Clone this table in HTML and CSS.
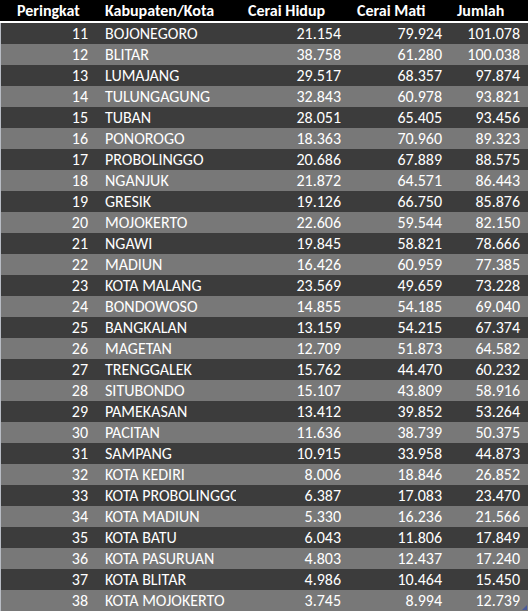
FILE: index.html
```html
<!DOCTYPE html>
<html>
<head>
<meta charset="utf-8">
<link rel="stylesheet" href="styles.css">
</head>
<body>
<div class="sheet">
<table class="rank">
<colgroup>
<col class="c1"><col class="c2"><col class="c3"><col class="c4"><col class="c5">
</colgroup>
<thead>
<tr>
<th class="h1">Peringkat</th><th class="h2">Kabupaten/Kota</th><th class="h3">Cerai Hidup</th><th class="h4">Cerai Mati</th><th class="h5">Jumlah</th>
</tr>
</thead>
<tbody>
<tr><td class="n1">11</td><td class="t2">BOJONEGORO</td><td class="n3">21.154</td><td class="n4">79.924</td><td class="n5">101.078</td></tr>
<tr><td class="n1">12</td><td class="t2">BLITAR</td><td class="n3">38.758</td><td class="n4">61.280</td><td class="n5">100.038</td></tr>
<tr><td class="n1">13</td><td class="t2">LUMAJANG</td><td class="n3">29.517</td><td class="n4">68.357</td><td class="n5">97.874</td></tr>
<tr><td class="n1">14</td><td class="t2">TULUNGAGUNG</td><td class="n3">32.843</td><td class="n4">60.978</td><td class="n5">93.821</td></tr>
<tr><td class="n1">15</td><td class="t2">TUBAN</td><td class="n3">28.051</td><td class="n4">65.405</td><td class="n5">93.456</td></tr>
<tr><td class="n1">16</td><td class="t2">PONOROGO</td><td class="n3">18.363</td><td class="n4">70.960</td><td class="n5">89.323</td></tr>
<tr><td class="n1">17</td><td class="t2">PROBOLINGGO</td><td class="n3">20.686</td><td class="n4">67.889</td><td class="n5">88.575</td></tr>
<tr><td class="n1">18</td><td class="t2">NGANJUK</td><td class="n3">21.872</td><td class="n4">64.571</td><td class="n5">86.443</td></tr>
<tr><td class="n1">19</td><td class="t2">GRESIK</td><td class="n3">19.126</td><td class="n4">66.750</td><td class="n5">85.876</td></tr>
<tr><td class="n1">20</td><td class="t2">MOJOKERTO</td><td class="n3">22.606</td><td class="n4">59.544</td><td class="n5">82.150</td></tr>
<tr><td class="n1">21</td><td class="t2">NGAWI</td><td class="n3">19.845</td><td class="n4">58.821</td><td class="n5">78.666</td></tr>
<tr><td class="n1">22</td><td class="t2">MADIUN</td><td class="n3">16.426</td><td class="n4">60.959</td><td class="n5">77.385</td></tr>
<tr><td class="n1">23</td><td class="t2">KOTA MALANG</td><td class="n3">23.569</td><td class="n4">49.659</td><td class="n5">73.228</td></tr>
<tr><td class="n1">24</td><td class="t2">BONDOWOSO</td><td class="n3">14.855</td><td class="n4">54.185</td><td class="n5">69.040</td></tr>
<tr><td class="n1">25</td><td class="t2">BANGKALAN</td><td class="n3">13.159</td><td class="n4">54.215</td><td class="n5">67.374</td></tr>
<tr><td class="n1">26</td><td class="t2">MAGETAN</td><td class="n3">12.709</td><td class="n4">51.873</td><td class="n5">64.582</td></tr>
<tr><td class="n1">27</td><td class="t2">TRENGGALEK</td><td class="n3">15.762</td><td class="n4">44.470</td><td class="n5">60.232</td></tr>
<tr><td class="n1">28</td><td class="t2">SITUBONDO</td><td class="n3">15.107</td><td class="n4">43.809</td><td class="n5">58.916</td></tr>
<tr><td class="n1">29</td><td class="t2">PAMEKASAN</td><td class="n3">13.412</td><td class="n4">39.852</td><td class="n5">53.264</td></tr>
<tr><td class="n1">30</td><td class="t2">PACITAN</td><td class="n3">11.636</td><td class="n4">38.739</td><td class="n5">50.375</td></tr>
<tr><td class="n1">31</td><td class="t2">SAMPANG</td><td class="n3">10.915</td><td class="n4">33.958</td><td class="n5">44.873</td></tr>
<tr><td class="n1">32</td><td class="t2">KOTA KEDIRI</td><td class="n3">8.006</td><td class="n4">18.846</td><td class="n5">26.852</td></tr>
<tr><td class="n1">33</td><td class="t2">KOTA PROBOLINGGO</td><td class="n3">6.387</td><td class="n4">17.083</td><td class="n5">23.470</td></tr>
<tr><td class="n1">34</td><td class="t2">KOTA MADIUN</td><td class="n3">5.330</td><td class="n4">16.236</td><td class="n5">21.566</td></tr>
<tr><td class="n1">35</td><td class="t2">KOTA BATU</td><td class="n3">6.043</td><td class="n4">11.806</td><td class="n5">17.849</td></tr>
<tr><td class="n1">36</td><td class="t2">KOTA PASURUAN</td><td class="n3">4.803</td><td class="n4">12.437</td><td class="n5">17.240</td></tr>
<tr><td class="n1">37</td><td class="t2">KOTA BLITAR</td><td class="n3">4.986</td><td class="n4">10.464</td><td class="n5">15.450</td></tr>
<tr><td class="n1">38</td><td class="t2">KOTA MOJOKERTO</td><td class="n3">3.745</td><td class="n4">8.994</td><td class="n5">12.739</td></tr>
</tbody>
</table>
<span class="handle"></span>
</div>
</body>
</html>
```

FILE: styles.css
```css
html, body {
  margin: 0;
  padding: 0;
  background: #ffffff;
}

.sheet {
  position: relative;
  width: 528px;
  height: 611px;
  overflow: hidden;
}

.rank {
  border-collapse: collapse;
  border-spacing: 0;
  table-layout: fixed;
  width: 528px;
  font-family: Carlito, Calibri, Lato, "Open Sans", sans-serif;
  font-size: 16px;
  color: #ffffff;
}

.c1 { width: 96px; }
.c2 { width: 140px; }
.c3 { width: 111px; }
.c4 { width: 100px; }
.c5 { width: 81px; }

.rank th,
.rank td {
  padding: 0;
  height: 21px;
  line-height: 21px;
  white-space: nowrap;
  overflow: hidden;
}

.rank thead tr {
  background: #000000;
  border-bottom: 2px solid #ffffff;
}

.rank th {
  font-weight: 700;
  text-align: left;
}

.rank th.h1 { padding-left: 17px; }
.rank th.h2 { padding-left: 9px; }
.rank th.h3 { padding-left: 12px; }
.rank th.h4 { padding-left: 10px; }
.rank th.h5 { padding-left: 10px; }

.rank tbody tr:nth-child(odd) { background: #3c3c3c; }
.rank tbody tr:nth-child(even) { background: #787878; }

.rank tbody td:first-child {
  box-shadow: inset 1px 0 0 #b8bcc4;
}

.rank td.n1 { text-align: right; padding-right: 8px; }
.rank td.t2 { text-align: left; padding-left: 9px; text-overflow: clip; }
.rank td.n3 { text-align: right; padding-right: 6px; }
.rank td.n4 { text-align: right; padding-right: 5px; }
.rank td.n5 { text-align: right; padding-right: 8px; }

.handle {
  position: absolute;
  right: 1px;
  bottom: 1px;
  width: 0;
  height: 0;
  border-left: 5px solid transparent;
  border-bottom: 5px solid #4a5a9a;
}
```
